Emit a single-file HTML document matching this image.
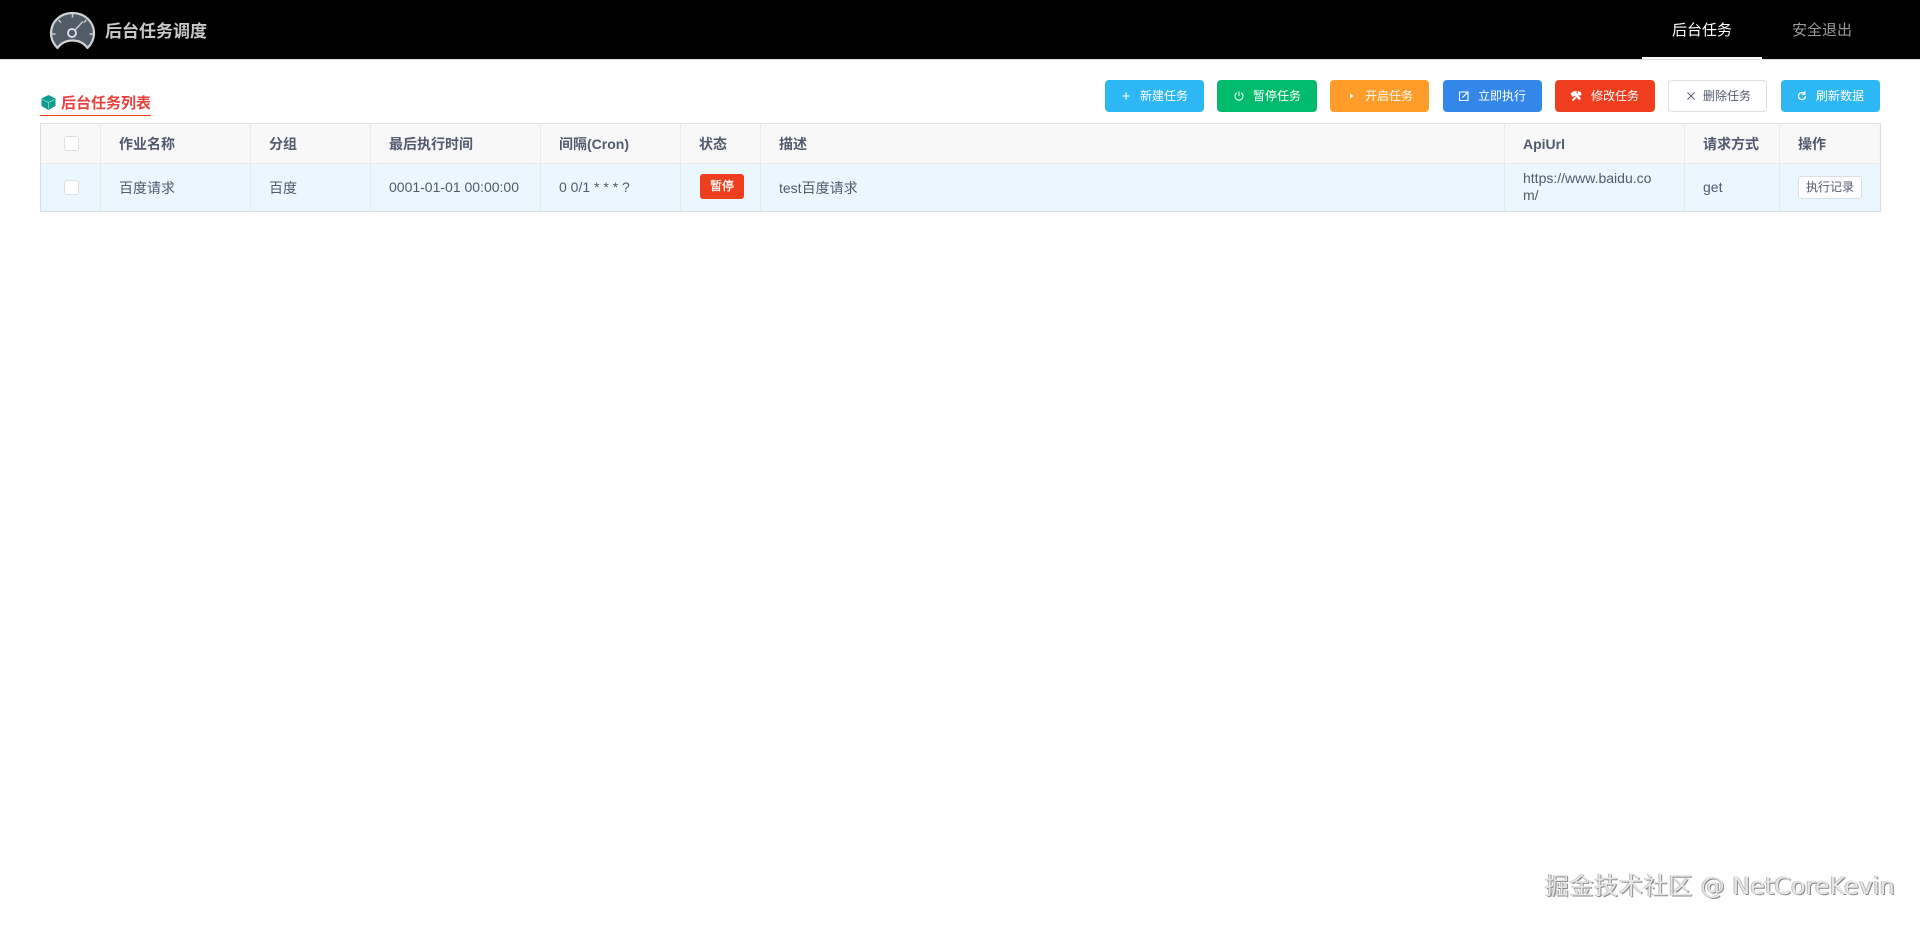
<!DOCTYPE html>
<html lang="zh"><head><meta charset="utf-8"><title>后台任务调度</title>
<style>
html,body{margin:0;padding:0;width:1920px;height:925px;background:#fff;overflow:hidden;font-family:"Liberation Sans","Noto Sans CJK SC",sans-serif;color:#515a6e}
.a{position:absolute;white-space:nowrap}
.top{left:0;top:0;width:1920px;height:59px;background:#000;border-bottom:1px solid #e0e0e0}
.btn{position:absolute;top:80px;height:32px;border-radius:4px;color:#fff;font-size:12px;line-height:33px}
.btn span{position:absolute;top:0;white-space:nowrap}
.btn svg{position:absolute;top:10px;width:12px;height:12px}
.line{position:absolute;background:#e8eaec;width:1px}
.th,.td{position:absolute;font-size:14px;white-space:nowrap}
.th{top:134px;line-height:20px;font-weight:bold;color:#515a6e}
.td{top:178px;line-height:20px;color:#515a6e}
.cb{position:absolute;left:64px;width:13px;height:13px;border:1px solid #dcdee2;border-radius:3px;background:#fff}
</style></head><body>
<div class="a top"></div>
<svg class="a" style="left:48px;top:9px" width="50" height="44" viewBox="0 0 50 44">
<path d="M9.500 39C5 34.500 3 29.500 3 24.500C3 12.500 12.500 4 24.500 4C36.500 4 46 12.500 46 24.500C46 29.500 44 34.500 39.500 39C35.500 33.500 30.500 31.500 24.500 31.500C18.500 31.500 13.500 33.500 9.500 39Z" fill="#515c67" stroke="#d0d3d5" stroke-width="2.200" stroke-linejoin="round"/>
<path d="M24.500 5v3.500M10.500 11l2.500 2.500M38.500 11l-2.500 2.500M4 25h3.500M41.500 25h3.500" stroke="#c9cdd0" stroke-width="1.500"/>
<circle cx="24" cy="24" r="4" fill="none" stroke="#e2e4e6" stroke-width="1.800"/>
<path d="M27 21L35 12.500" stroke="#c9cdd0" stroke-width="1.400"/>
</svg>
<div class="a" style="left:105px;top:20px;font-size:17px;line-height:24px;font-weight:bold;color:#c9c9c9">后台任务调度</div>
<div class="a" style="left:1672px;top:20px;font-size:15px;line-height:22px;color:#fff">后台任务</div>
<div class="a" style="left:1792px;top:20px;font-size:15px;line-height:22px;color:#9a9a9a">安全退出</div>
<div class="a" style="left:1642px;top:57px;width:120px;height:2px;background:#fff"></div>

<svg class="a" style="left:41px;top:95px" width="15" height="15" viewBox="0 0 15 15"><path d="M7.500 0L14.500 3.500V11L7.500 15L.5 11V3.500Z" fill="#0f9a8e"/><path d="M1.500 4.500L7.500 7.500L13.500 4.500M7.500 7.500V14" stroke="#7fe0d4" stroke-width=".8" fill="none"/></svg>
<div class="a" style="left:61px;top:93px;font-size:15px;line-height:21px;font-weight:bold;color:#e8423f">后台任务列表</div>
<div class="a" style="left:40px;top:115px;width:111px;height:1px;background:#ed4014"></div>

<div class="btn" style="left:1105px;width:99px;background:#2db7f5"><svg style="left:15px" viewBox="0 0 12 12"><path d="M6 2.500v7M2.500 6h7" stroke="#fff" stroke-width="1.100"/></svg><span style="left:35px">新建任务</span></div>
<div class="btn" style="left:1217px;width:100px;background:#00bb6c"><svg style="left:16px" viewBox="0 0 12 12"><path d="M3.800 2.800a4 4 0 1 0 4.400 0M6 1.500V6" stroke="#fff" stroke-width="1" fill="none"/></svg><span style="left:36px">暂停任务</span></div>
<div class="btn" style="left:1330px;width:99px;background:#ff9c2a"><svg style="left:15px" viewBox="0 0 12 12"><path d="M5 3.300L8.200 6L5 8.700Z" fill="#fff"/></svg><span style="left:35px">开启任务</span></div>
<div class="btn" style="left:1443px;width:99px;background:#3287e8"><svg style="left:15px" viewBox="0 0 12 12"><path d="M7.500 2H1.500V10.500H10V4.500M4.500 7.500L10 2M7.500 2H10V4.500" stroke="#fff" stroke-width="1.100" fill="none"/></svg><span style="left:35px">立即执行</span></div>
<div class="btn" style="left:1555px;width:100px;background:#f03d1e"><svg style="left:15px" viewBox="0 0 12 12"><path d="M.5 3.500L4 1H7L6.300 2.700L11 8.500L9.500 10.300L4.500 5.800L2.500 7ZM8 1L11 2.200L11.500 5L9.800 5.700L7.300 4ZM3.500 8L5 6.800L6.200 8L3.500 11L1.800 10Z" fill="#fff"/></svg><span style="left:36px">修改任务</span></div>
<div class="btn" style="left:1668px;width:97px;height:30px;background:#fff;border:1px solid #dcdee2;color:#515a6e;line-height:31px"><svg style="left:16px;top:9px" viewBox="0 0 12 12"><path d="M2.500 2.500l7 7M9.500 2.500l-7 7" stroke="#515a6e" stroke-width="1"/></svg><span style="left:34px">删除任务</span></div>
<div class="btn" style="left:1781px;width:99px;background:#2db7f5"><svg style="left:15px" viewBox="0 0 12 12"><path d="M9.500 6A3.500 3.500 0 1 1 8.300 3.400M8.800 1.300V4.200H6" stroke="#fff" stroke-width="1.300" fill="none"/></svg><span style="left:35px">刷新数据</span></div>

<div class="a" style="left:40px;top:123px;width:1839px;height:87px;border:1px solid #dcdee2;background:#ebf7ff"></div>
<div class="a" style="left:41px;top:124px;width:1838px;height:39px;background:#f8f8f9"></div>
<div class="a" style="left:41px;top:163px;width:1838px;height:1px;background:#e8eaec"></div>
<div class="line" style="left:100px;top:124px;height:87px"></div>
<div class="line" style="left:250px;top:124px;height:87px"></div>
<div class="line" style="left:370px;top:124px;height:87px"></div>
<div class="line" style="left:540px;top:124px;height:87px"></div>
<div class="line" style="left:680px;top:124px;height:87px"></div>
<div class="line" style="left:760px;top:124px;height:87px"></div>
<div class="line" style="left:1504px;top:124px;height:87px"></div>
<div class="line" style="left:1684px;top:124px;height:87px"></div>
<div class="line" style="left:1779px;top:124px;height:87px"></div>

<div class="cb" style="top:136px"></div>
<div class="cb" style="top:180px"></div>
<div class="th" style="left:119px">作业名称</div>
<div class="th" style="left:269px">分组</div>
<div class="th" style="left:389px">最后执行时间</div>
<div class="th" style="left:559px">间隔(Cron)</div>
<div class="th" style="left:699px">状态</div>
<div class="th" style="left:779px">描述</div>
<div class="th" style="left:1523px">ApiUrl</div>
<div class="th" style="left:1703px">请求方式</div>
<div class="th" style="left:1798px">操作</div>

<div class="td" style="left:119px">百度请求</div>
<div class="td" style="left:269px">百度</div>
<div class="td" style="left:389px;top:177px">0001-01-01 00:00:00</div>
<div class="td" style="left:559px;top:177px">0 0/1 * * * ?</div>
<div class="a" style="left:700px;top:174px;width:44px;height:25px;border-radius:3px;background:#ed3f1e;color:#fff;font-size:12px;line-height:24px;text-align:center;-webkit-text-stroke:.25px #fff">暂停</div>
<div class="td" style="left:779px">test百度请求</div>
<div class="td" style="left:1523px;top:170px;line-height:17px">https://www.baidu.co<br>m/</div>
<div class="td" style="left:1703px;top:177px">get</div>
<div class="a" style="left:1798px;top:176px;width:62px;height:21px;border:1px solid #dcdee2;border-radius:3px;background:#fff;color:#515a6e;font-size:12px;line-height:20px;text-align:center">执行记录</div>

<div class="a" style="left:1545px;top:867px;font-size:24px;line-height:34px;font-family:'DejaVu Sans','Noto Sans CJK SC',sans-serif;color:#e6e6e6;text-shadow:1px 1px 0 #8a8a8a,-1px 0 0 #bdbdbd;letter-spacing:-.05px"><span style="font-family:'Noto Sans CJK SC',sans-serif;letter-spacing:.7px">掘金技术社区</span> @ NetCoreKevin</div>
</body></html>
